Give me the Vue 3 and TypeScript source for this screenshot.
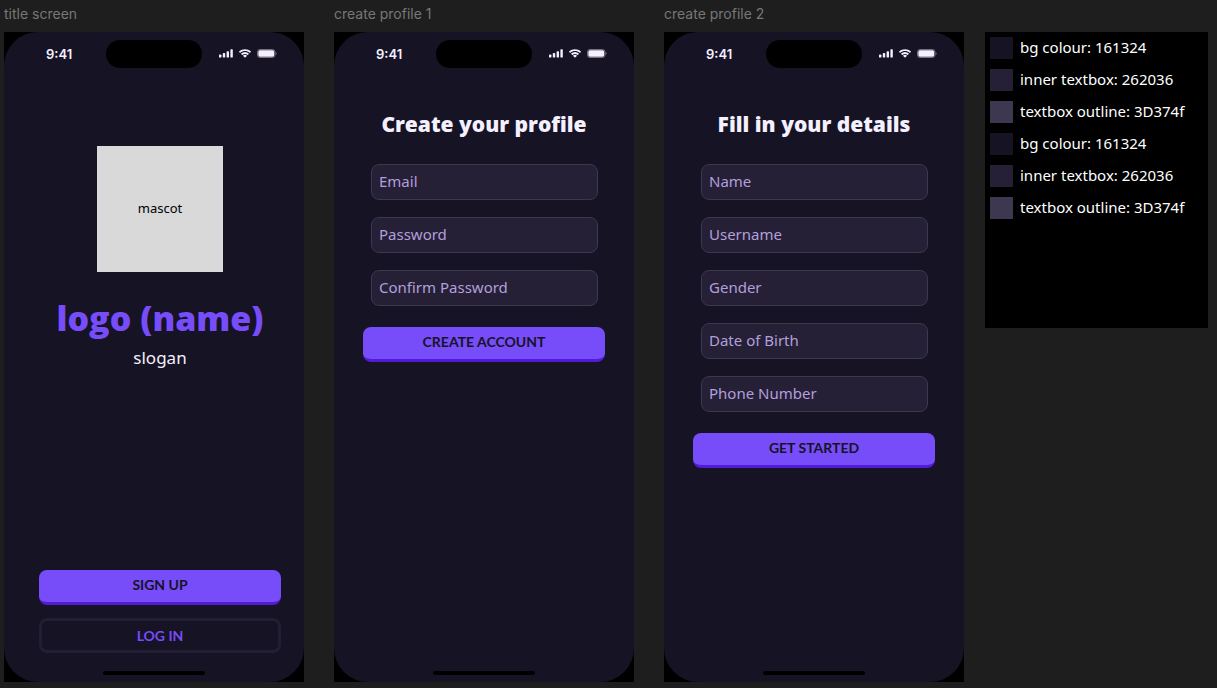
<script setup lang="ts">
interface Field {
  id: string
  label: string
  type: string
}

interface Screen {
  id: string
  name: string
  heading: string
  fields: Field[]
  action: string
}

interface Swatch {
  label: string
  tone: string
}

const forms: Screen[] = [
  {
    id: 'profile',
    name: 'create profile 1',
    heading: 'Create your profile',
    fields: [
      { id: 'email', label: 'Email', type: 'email' },
      { id: 'password', label: 'Password', type: 'password' },
      { id: 'confirm', label: 'Confirm Password', type: 'password' },
    ],
    action: 'CREATE ACCOUNT',
  },
  {
    id: 'details',
    name: 'create profile 2',
    heading: 'Fill in your details',
    fields: [
      { id: 'name', label: 'Name', type: 'text' },
      { id: 'username', label: 'Username', type: 'text' },
      { id: 'gender', label: 'Gender', type: 'text' },
      { id: 'birth', label: 'Date of Birth', type: 'text' },
      { id: 'phone', label: 'Phone Number', type: 'tel' },
    ],
    action: 'GET STARTED',
  },
]

const screens: (Screen | null)[] = [null, ...forms]

const tones: Swatch[] = [
  { label: 'bg colour: 161324', tone: 'bg' },
  { label: 'inner textbox: 262036', tone: 'inner' },
  { label: 'textbox outline: 3D374f', tone: 'outline' },
]
const swatches: Swatch[] = [...tones, ...tones]
</script>

<template>
  <main class="canvas">
    <div class="screens">
      <section v-for="(screen, i) in screens" :key="i" class="column">
        <div class="frame-name">{{ screen ? screen.name : 'title screen' }}</div>
        <div class="frame">
          <div class="screen">
            <div class="status">
              <span class="time">9:41</span>
              <span class="island"></span>
              <span class="indicators">
                <svg class="signal" viewBox="0 0 14 9" width="14" height="9" aria-hidden="true">
                  <rect x="0" y="5.6" width="2.4" height="3" rx="0.7" />
                  <rect x="3.8" y="4.1" width="2.4" height="4.5" rx="0.7" />
                  <rect x="7.6" y="2.2" width="2.4" height="6.4" rx="0.7" />
                  <rect x="11.4" y="0.2" width="2.4" height="8.4" rx="0.7" />
                </svg>
                <svg class="wifi" viewBox="0 0 17 12" width="12" height="9" aria-hidden="true">
                  <path d="M8.5 2.4c2.5 0 4.8.9 6.6 2.6.1.1.4.1.5 0l1.3-1.3c.1-.2.1-.4 0-.5C12.2-1 4.8-1 .1 3.2c-.1.1-.1.3 0 .5L1.4 5c.1.1.4.1.5 0C3.700 3.300 6 2.400 8.500 2.400Z" />
                  <path d="M8.500 6.600c1.300 0 2.600.5 3.600 1.400.2.100.4.100.5 0l1.300-1.300c.2-.2.200-.4 0-.6a7.900 7.900 0 0 0-10.800 0c-.2.200-.2.400 0 .6L4.400 8c.1.100.3.100.5 0 1-.9 2.300-1.400 3.600-1.400Z" />
                  <path d="M11.100 9.500c.1-.1.100-.4 0-.5a4 4 0 0 0-5.200 0c-.1.100-.1.400 0 .5l2.300 2.300c.2.200.4.200.6 0l2.300-2.300Z" />
                </svg>
                <svg class="battery" viewBox="0 0 20 9" width="20" height="9" aria-hidden="true">
                  <rect x="0.500" y="0.500" width="17.500" height="8" rx="2.500" class="shell" />
                  <rect x="1.300" y="1.300" width="15.900" height="6.400" rx="1.600" />
                  <path d="M18.700 3v3c.7-.3 1-.9 1-1.500s-.3-1.200-1-1.500Z" class="tip" />
                </svg>
              </span>
            </div>

            <form v-if="screen" class="form" @submit.prevent>
              <h1 class="heading">{{ screen.heading }}</h1>
              <div class="fields">
                <input
                  v-for="field in screen.fields"
                  :id="field.id"
                  :key="field.id"
                  class="field"
                  :type="field.type"
                  :placeholder="field.label"
                  :aria-label="field.label"
                />
              </div>
              <button class="primary" type="submit">{{ screen.action }}</button>
            </form>

            <div v-else class="title">
              <div class="mascot">mascot</div>
              <h1 class="logo">logo (name)</h1>
              <p class="slogan">slogan</p>
              <div class="actions">
                <button class="primary" type="button">SIGN UP</button>
                <button class="secondary" type="button">LOG IN</button>
              </div>
            </div>

            <div class="home"></div>
          </div>
        </div>
      </section>
    </div>

    <aside class="palette">
      <div v-for="(swatch, i) in swatches" :key="i" class="swatch">
        <span class="chip" :class="swatch.tone"></span>
        <span>{{ swatch.label }}</span>
      </div>
    </aside>
  </main>
</template>

<style>
body {
  margin: 0;
  background: #1e1e1e;
}
</style>

<style scoped>
* {
  box-sizing: border-box;
}

.canvas {
  display: grid;
  grid-template-columns: minmax(0, 960fr) minmax(0, 223fr);
  column-gap: 21px;
  min-height: 100vh;
  padding: 0 9px 6px 4px;
  background: #1e1e1e;
  font-family: "Noto Sans", "Open Sans", sans-serif;
}

.screens {
  display: grid;
  grid-template-columns: repeat(3, minmax(0, 1fr));
  column-gap: 30px;
}

.column {
  display: flex;
  flex-direction: column;
}

.frame-name {
  height: 32px;
  font: 400 14px/28px Inter, sans-serif;
  color: #777;
}

.frame {
  display: flex;
  flex: 1;
  background: #000;
}

.screen {
  display: flex;
  flex: 1;
  flex-direction: column;
  border-radius: 34px;
  background: #161324;
  color: #f4f0ff;
}

.status {
  display: grid;
  grid-template-columns: 1fr 96px 1fr;
  align-items: center;
  padding: 8px 1px 0 0;
}

.time {
  padding-left: 42px;
  font: 600 13px/26px Inter, sans-serif;
}

.island {
  height: 28px;
  border-radius: 14px;
  background: #000;
}

.indicators {
  display: flex;
  align-items: center;
  justify-content: flex-end;
  gap: 6px;
  padding: 0 26px 2px 0;
  fill: #f4f0ff;
}

.shell {
  fill: none;
  stroke: #77737f;
}

.tip {
  fill: #77737f;
}

.title,
.form {
  display: flex;
  flex: 1;
  flex-direction: column;
  align-items: center;
}

.title {
  padding: 78px 23px 18px 35px;
}

.mascot {
  display: flex;
  align-items: center;
  justify-content: center;
  width: 126px;
  height: 126px;
  padding-bottom: 2px;
  background: #d9d9d9;
  color: #000;
  font-size: 13px;
}

.logo {
  margin: 24px 0 0;
  font: 800 34px/44px "Open Sans", sans-serif;
  color: #774cf9;
}

.slogan {
  margin: 6px 0 0;
  font-size: 17px;
  line-height: 24px;
}

.actions {
  display: grid;
  align-self: stretch;
  row-gap: 13px;
  margin-top: auto;
}

.primary,
.secondary {
  width: 100%;
  height: 35px;
  padding: 0;
  border-radius: 8px;
  font: 700 14px/20px Lato, sans-serif;
}

.primary {
  border: 0;
  border-bottom: 3px solid #521bd8;
  padding-bottom: 3px;
  background: #774cf9;
  color: #161324;
}

.secondary {
  border: 3px solid #231e33;
  background: #161324;
  color: #774cf9;
}

.form {
  padding: 38px 29px 18px;
}

.heading {
  margin: 0;
  font: 800 21px/36px "Open Sans", sans-serif;
}

.fields {
  display: grid;
  align-self: stretch;
  row-gap: 17px;
  margin: 22px 7px 21px 8px;
}

.field {
  width: 100%;
  height: 36px;
  border: 1px solid #3d374f;
  border-radius: 8px;
  padding: 0 7px 2px;
  background: #262036;
  color: #f4f0ff;
  font: 400 15px/20px "Noto Sans", "Open Sans", sans-serif;
}

.field::placeholder {
  color: #b29fdc;
  opacity: 1;
}

.home {
  align-self: center;
  width: 102px;
  height: 4px;
  margin-bottom: 7px;
  border-radius: 2px;
  background: #000;
}

.palette {
  display: grid;
  align-content: start;
  row-gap: 10px;
  height: 296px;
  margin-top: 32px;
  padding: 5px;
  background: #000;
  color: #fff;
  font-size: 15px;
  line-height: 20px;
}

.swatch {
  display: flex;
  gap: 7px;
  white-space: nowrap;
}

.chip {
  flex: none;
  width: 23px;
  height: 22px;
}

.bg {
  background: #161324;
}

.inner {
  background: #262036;
}

.outline {
  background: #3d374f;
}
</style>
